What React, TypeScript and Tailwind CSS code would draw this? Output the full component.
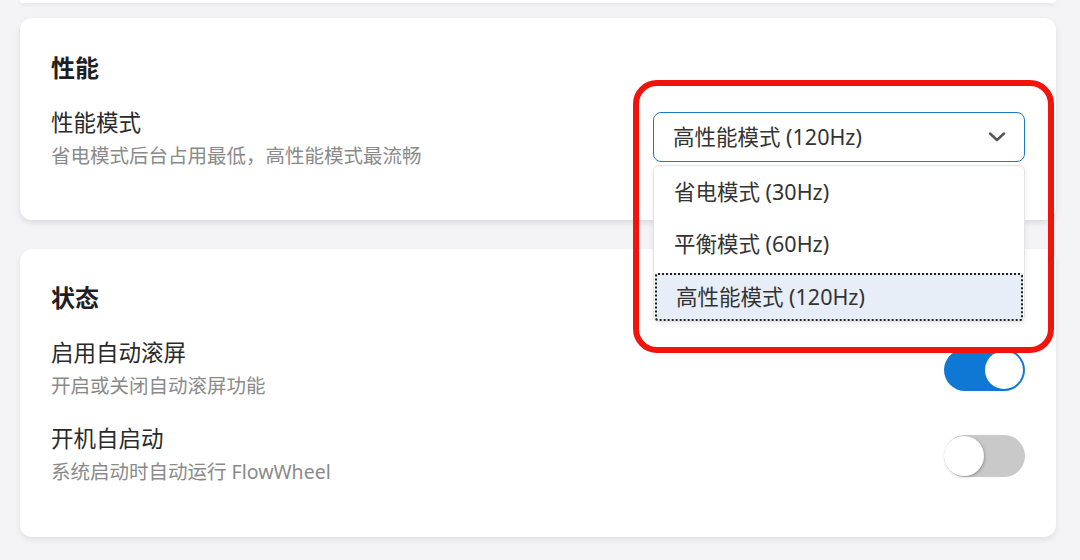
import React from "react";

const font = { fontFamily: '"Noto Sans", "Noto Sans CJK SC", sans-serif' };

function Toggle({ on }: { on: boolean }) {
  return on ? (
    <div className="relative w-[81px] h-[42px] rounded-full bg-[#0f78d4] shrink-0">
      <div className="absolute right-[2px] top-[2px] w-[38px] h-[38px] rounded-full bg-white" />
    </div>
  ) : (
    <div className="relative w-[81px] h-[42px] rounded-full bg-[#c9c9c9] shrink-0">
      <div className="absolute left-0 top-[1px] w-[40px] h-[40px] rounded-full bg-white shadow-[1px_1px_3px_rgba(0,0,0,0.25)]" />
    </div>
  );
}

export default function App() {
  return (
    <div className="w-[1080px] h-[560px] bg-[#f4f4f6] overflow-hidden relative" style={font}>
      <div className="pl-[20px] pr-[24px] flex flex-col">
        <div className="h-[3px] bg-white rounded-b-[12px] shadow-[0_2px_4px_rgba(0,0,0,0.08)]" />
        <div className="mt-[15px] h-[202px] bg-white rounded-[12px] shadow-[0_3px_6px_rgba(0,0,0,0.1)] pl-[31px] pr-[31px] pt-[34px]">
          <div className="text-[24px] leading-[32px] font-bold text-[#1e1e24]">性能</div>
          <div className="mt-[23px] flex items-start justify-between">
            <div className="flex flex-col">
              <div className="text-[22.5px] leading-[32px] text-[#2a2a2a]">性能模式</div>
              <div className="text-[19.5px] leading-[34px] text-[#8a8a8a]">省电模式后台占用最低，高性能模式最流畅</div>
            </div>
            <div className="relative mt-[5px]">
              <div className="w-[372px] h-[50px] border-[1.5px] border-[#1f7ac4] rounded-[8px] flex items-center justify-between pl-[19px] pr-[17px] bg-white">
                <span className="text-[21.5px] text-[#333]">高性能模式 (120Hz)</span>
                <svg width="20" height="12" viewBox="0 0 20 12" fill="none">
                  <path d="M3 2.5 L10 9 L17 2.5" stroke="#555" strokeWidth="2.4" strokeLinecap="round" strokeLinejoin="round" />
                </svg>
              </div>
              <div className="absolute left-0 top-[53px] w-[372px] h-[157px] bg-white border border-[#e4e4e4] rounded-[6px] shadow-[0_2px_6px_rgba(0,0,0,0.08)] flex flex-col z-10">
                <div className="h-[52px] flex items-center pl-[20px] text-[21.5px] text-[#333]">省电模式 (30Hz)</div>
                <div className="h-[52px] flex items-center pl-[20px] text-[21.5px] text-[#333]">平衡模式 (60Hz)</div>
                <div className="mx-[1px] h-[48px] mt-[3px] flex items-center pl-[19px] text-[21.5px] text-[#333] bg-[#e7eef8] border-2 border-dotted border-[#222] rounded-[3px]">高性能模式 (120Hz)</div>
              </div>
            </div>
          </div>
        </div>
        <div className="mt-[29px] h-[288px] bg-white rounded-[12px] shadow-[0_3px_6px_rgba(0,0,0,0.08)] pl-[31px] pr-[31px] pt-[33px]">
          <div className="text-[24px] leading-[32px] font-bold text-[#1e1e24]">状态</div>
          <div className="mt-[23px] flex items-center justify-between">
            <div className="flex flex-col">
              <div className="text-[22.5px] leading-[32px] text-[#2a2a2a]">启用自动滚屏</div>
              <div className="text-[19.5px] leading-[34px] text-[#8a8a8a]">开启或关闭自动滚屏功能</div>
            </div>
            <Toggle on />
          </div>
          <div className="mt-[20px] flex items-center justify-between">
            <div className="flex flex-col">
              <div className="text-[22.5px] leading-[32px] text-[#2a2a2a]">开机自启动</div>
              <div className="text-[19.5px] leading-[34px] text-[#8a8a8a]">系统启动时自动运行 FlowWheel</div>
            </div>
            <Toggle on={false} />
          </div>
        </div>
      </div>
      <div className="absolute left-[633px] top-[80px] w-[421px] h-[273px] border-[6px] border-[#f2140c] rounded-[24px] z-20 pointer-events-none" />
    </div>
  );
}
